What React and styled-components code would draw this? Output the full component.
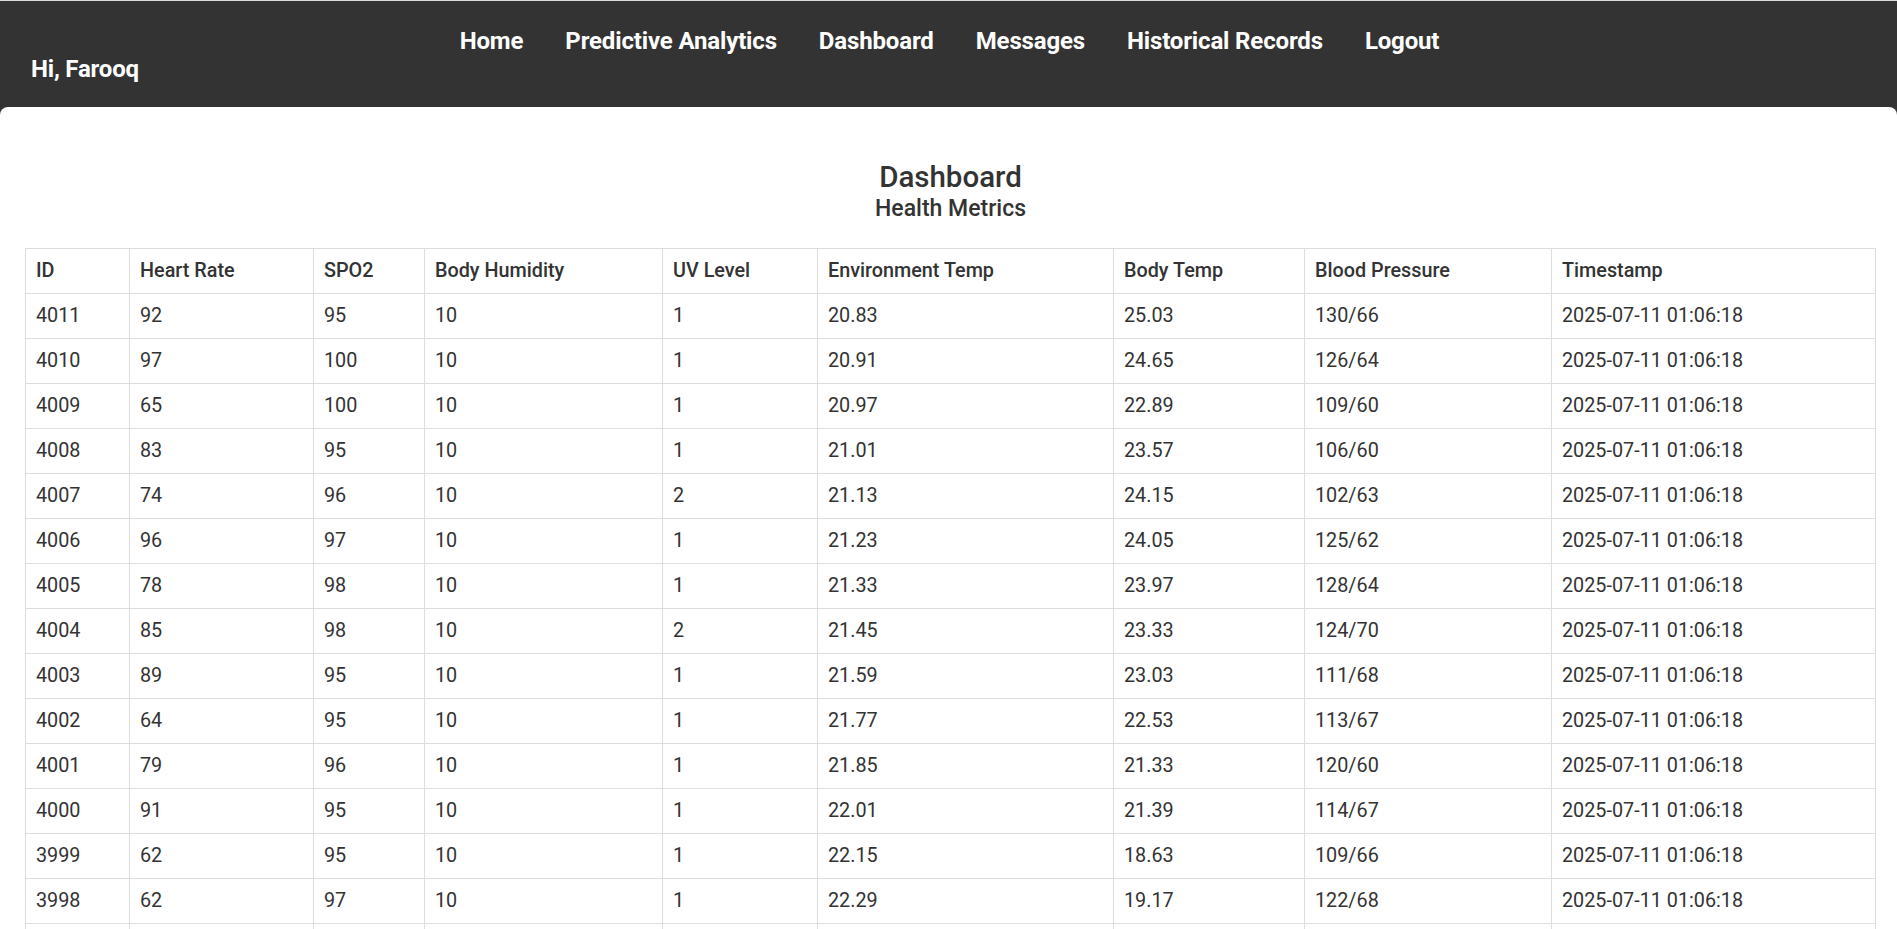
import React from "react";
import styled, { createGlobalStyle } from "styled-components";

const GlobalStyle = createGlobalStyle`
  html, body {
    margin: 0;
    padding: 0;
    background: #333333;
    font-family: Roboto, "Liberation Sans", Arial, sans-serif;
  }
  * { box-sizing: border-box; }
`;

const Header = styled.header`
  height: 107px;
  background: #333333;
  border-top: 1px solid #dcd8dc;
  padding: 26px 0 0 31px;
  display: flex;
  flex-direction: column;
`;

const Nav = styled.nav`
  display: flex;
  justify-content: center;
  gap: 42px;
  padding-right: 31px;
  margin-left: 2px;
`;

const NavLink = styled.a`
  color: #ffffff;
  font-size: 24px;
  font-weight: 700;
  line-height: 28px;
  text-decoration: none;
  letter-spacing: -0.15px;
  cursor: pointer;
`;

const Greeting = styled.div`
  color: #ffffff;
  font-size: 24px;
  font-weight: 700;
  line-height: 28px;
  letter-spacing: -0.2px;
`;

const Card = styled.main`
  background: #ffffff;
  border-radius: 8px 8px 0 0;
  min-height: 822px;
  padding: 53px 22px 40px 25px;
`;

const Title = styled.h1`
  margin: 0;
  text-align: center;
  color: #333333;
  font-size: 29.5px;
  font-weight: 500;
  line-height: 34px;
  padding-left: 1px;
`;

const Subtitle = styled.h2`
  margin: 2px 0 0;
  text-align: center;
  color: #333333;
  font-size: 23px;
  font-weight: 500;
  line-height: 26px;
  padding-left: 1px;
`;

const Table = styled.table`
  margin-top: 26px;
  width: 100%;
  border-collapse: collapse;
  table-layout: fixed;
  color: #333333;
  font-size: 19.8px;
`;

const HeadCell = styled.th`
  border: 1px solid #dddddd;
  padding: 10px 10px;
  line-height: 24px;
  text-align: left;
  font-weight: 500;
  white-space: nowrap;
`;

const Cell = styled.td`
  border: 1px solid #dddddd;
  padding: 10px 10px;
  line-height: 24px;
  text-align: left;
  font-weight: 400;
  white-space: nowrap;
`;

const columns = [
  { label: "ID", width: 104 },
  { label: "Heart Rate", width: 184 },
  { label: "SPO2", width: 111 },
  { label: "Body Humidity", width: 238 },
  { label: "UV Level", width: 155 },
  { label: "Environment Temp", width: 296 },
  { label: "Body Temp", width: 191 },
  { label: "Blood Pressure", width: 247 },
  { label: "Timestamp", width: 324 },
];

const rows = [
  [4011, 92, 95, 10, 1, "20.83", "25.03", "130/66"],
  [4010, 97, 100, 10, 1, "20.91", "24.65", "126/64"],
  [4009, 65, 100, 10, 1, "20.97", "22.89", "109/60"],
  [4008, 83, 95, 10, 1, "21.01", "23.57", "106/60"],
  [4007, 74, 96, 10, 2, "21.13", "24.15", "102/63"],
  [4006, 96, 97, 10, 1, "21.23", "24.05", "125/62"],
  [4005, 78, 98, 10, 1, "21.33", "23.97", "128/64"],
  [4004, 85, 98, 10, 2, "21.45", "23.33", "124/70"],
  [4003, 89, 95, 10, 1, "21.59", "23.03", "111/68"],
  [4002, 64, 95, 10, 1, "21.77", "22.53", "113/67"],
  [4001, 79, 96, 10, 1, "21.85", "21.33", "120/60"],
  [4000, 91, 95, 10, 1, "22.01", "21.39", "114/67"],
  [3999, 62, 95, 10, 1, "22.15", "18.63", "109/66"],
  [3998, 62, 97, 10, 1, "22.29", "19.17", "122/68"],
  [3997, 71, 96, 10, 1, "22.41", "19.85", "118/65"],
];

const navItems = [
  "Home",
  "Predictive Analytics",
  "Dashboard",
  "Messages",
  "Historical Records",
  "Logout",
];

export default function App() {
  return (
    <>
      <GlobalStyle />
      <Header>
        <Nav>
          {navItems.map((n) => (
            <NavLink key={n}>{n}</NavLink>
          ))}
        </Nav>
        <Greeting>Hi, Farooq</Greeting>
      </Header>
      <Card>
        <Title>Dashboard</Title>
        <Subtitle>Health Metrics</Subtitle>
        <Table>
          <colgroup>
            {columns.map((c) => (
              <col key={c.label} style={{ width: c.width }} />
            ))}
          </colgroup>
          <thead>
            <tr>
              {columns.map((c) => (
                <HeadCell key={c.label}>{c.label}</HeadCell>
              ))}
            </tr>
          </thead>
          <tbody>
            {rows.map((r) => (
              <tr key={r[0]}>
                {r.map((v, i) => (
                  <Cell key={i}>{v}</Cell>
                ))}
                <Cell>2025-07-11 01:06:18</Cell>
              </tr>
            ))}
          </tbody>
        </Table>
      </Card>
    </>
  );
}
